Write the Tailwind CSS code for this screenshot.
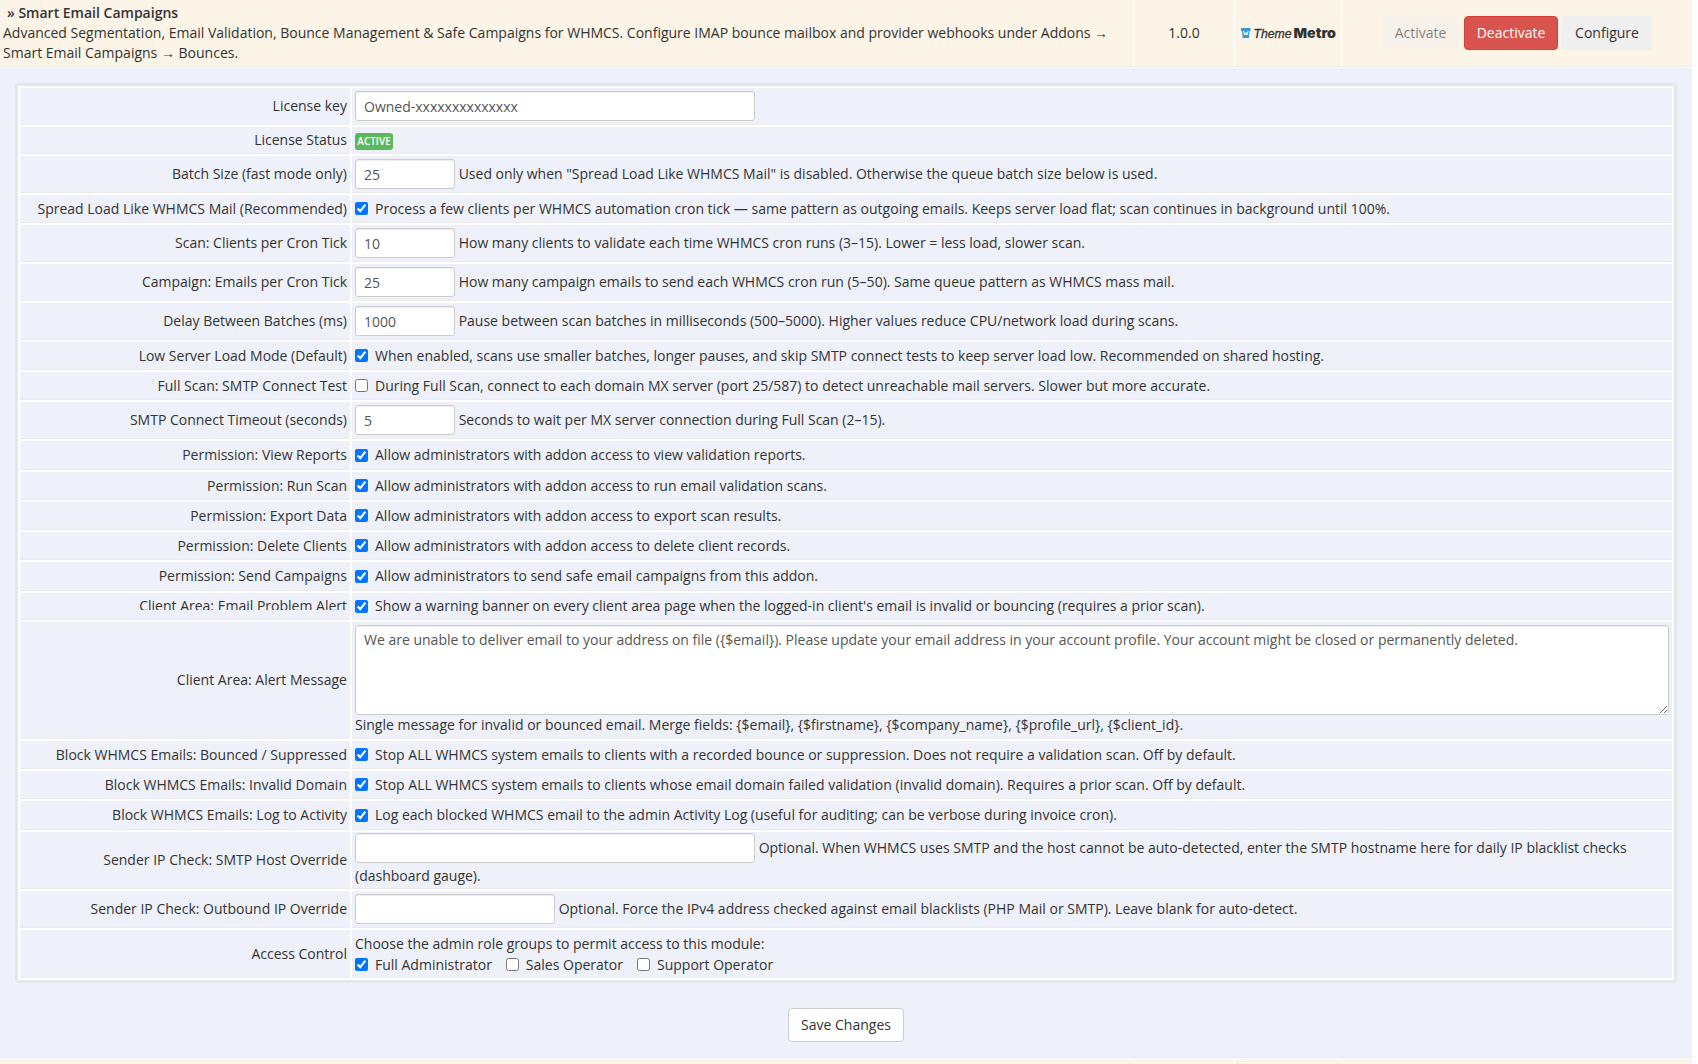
<!DOCTYPE html>
<html lang="en">
<head>
  <meta charset="UTF-8">
  <meta name="viewport" content="width=device-width, initial-scale=1.0">
  <title>Addon Modules</title>
  <script src="https://cdn.jsdelivr.net/npm/@tailwindcss/browser@4"></script>
</head>
<body class="bg-white text-[#333] text-sm leading-5 font-['Open_Sans',sans-serif] h-[1064px] overflow-hidden">

  <div class="w-[1692px] h-[1064px] bg-[#eef1f9] flex flex-col">

    <!-- Module row -->
    <header class="h-[68px] shrink-0 flex bg-[#fcf4e6] border-b border-white">
      <div class="w-[1134px] border-r border-r-white border-b border-b-[#ebebeb] pl-[3px] pt-[3px] pr-3">
        <p class="pl-1"><b class="font-semibold">» Smart Email Campaigns</b></p>
        <p class="w-[1118px]">Advanced Segmentation, Email Validation, Bounce Management &amp; Safe Campaigns for WHMCS. Configure IMAP bounce mailbox and provider webhooks under Addons → Smart Email Campaigns → Bounces.</p>
      </div>
      <div class="w-[101px] border-r border-r-white border-b border-b-[#ebebeb] flex items-center justify-center">1.0.0</div>
      <div class="w-[107px] border-r border-r-white border-b border-b-[#ebebeb] flex items-center pl-1.5">
        <svg width="96" height="16" viewBox="0 0 96 16">
          <path d="M0 3h9v3H8V4.800H6v5.700h1V13H2v-2.500h1V4.800H1V6H0z" fill="#3a9bd9"/>
          <path d="M0 3h9.500v3l-1.200.5L8 13H1.500L1.200 6.500 0 6z" fill="#3a9bd9"/>
          <path d="M2.500 6l1.200 4L4.800 7.500 5.900 10 7.100 6" fill="none" stroke="#fff" stroke-width="1"/>
          <text x="12.500" y="13" font-family="Liberation Sans Narrow, Liberation Sans" font-size="13" font-style="italic" fill="#333" stroke="#333" stroke-width=".3" textLength="38" lengthAdjust="spacingAndGlyphs">Theme</text>
          <text x="52.500" y="13" font-family="Inter" font-size="13" font-weight="900" fill="#333" textLength="42.500" lengthAdjust="spacingAndGlyphs">Metro</text>
        </svg>
      </div>
      <div class="flex-1 border-b border-b-[#ebebeb] flex items-center pl-[41px]">
        <button class="w-[75px] h-[34px] rounded bg-[#efefef]/35 text-[#333]/60">Activate</button>
        <button class="ml-[6px] w-[94px] h-[34px] rounded bg-[#d9534f] border border-[#d43f3a] text-white">Deactivate</button>
        <button class="ml-1 w-[90px] h-[34px] rounded bg-[#efefef]">Configure</button>
      </div>
    </header>

    <!-- Settings -->
    <main class="px-[15px] pt-[15px]">
      <table class="w-full table-fixed border-separate border-spacing-[2px] bg-white border-[3px] border-[#e2e7e9] rounded-[4px] [&_td]:bg-[#eef1f9] [&_td]:border-b [&_td]:border-[#ebebeb] [&_td]:px-[3px] [&_td]:py-0 [&_td:first-child]:text-right [&_input]:align-middle">
        <colgroup><col class="w-[330px]"><col></colgroup>
        <tbody id="settings"></tbody>
      </table>
      <div class="flex justify-center pt-[25px]">
        <button class="h-[34px] w-[116px] rounded bg-white border border-[#ccc]">Save Changes</button>
      </div>
    </main>

    <div class="mt-auto h-[7px] shrink-0 border-t border-[#ebebeb] bg-white pt-px">
      <div class="h-full bg-[#fcf4e6] flex">
        <div class="w-[1134px] border-r border-white"></div>
        <div class="w-[101px] border-r border-white"></div>
        <div class="w-[107px] border-r border-white"></div>
      </div>
    </div>
  </div>

  <script>
    const field = "h-[30px] px-2 bg-white border border-[#ccc] rounded-[3px] text-[#555] shadow-[inset_0_1px_1px_rgba(0,0,0,0.075)]";
    const text = (width, value, note = "") => `<div class="leading-[24px]"><input type="text" class="${field} ${width}" value="${value}"> <span class="relative top-px">${note}</span></div>`;
    const check = (label, checked = true) => `<label class="relative top-px inline-flex items-center gap-[7px]"><input type="checkbox" class="size-[13px]" ${checked ? "checked" : ""}>${label}</label>`;

    // [row height, label, control]
    const rows = [
      ["h-[37px]", "License key", text("w-[400px]", "Owned-xxxxxxxxxxxxxx")],
      ["h-[27px]", "License Status", `<span class="relative top-px flex items-center justify-center w-[38px] h-[17px] rounded-[3px] bg-[#5cb85c] text-white text-[10px] font-semibold">ACTIVE</span>`],
      ["h-[37px]", "Batch Size (fast mode only)", text("w-[100px]", "25", 'Used only when "Spread Load Like WHMCS Mail" is disabled. Otherwise the queue batch size below is used.')],
      ["h-[28px]", "Spread Load Like WHMCS Mail (Recommended)", check("Process a few clients per WHMCS automation cron tick — same pattern as outgoing emails. Keeps server load flat; scan continues in background until 100%.")],
      ["h-[37px]", "Scan: Clients per Cron Tick", text("w-[100px]", "10", "How many clients to validate each time WHMCS cron runs (3–15). Lower = less load, slower scan.")],
      ["h-[37px]", "Campaign: Emails per Cron Tick", text("w-[100px]", "25", "How many campaign emails to send each WHMCS cron run (5–50). Same queue pattern as WHMCS mass mail.")],
      ["h-[37px]", "Delay Between Batches (ms)", text("w-[100px]", "1000", "Pause between scan batches in milliseconds (500–5000). Higher values reduce CPU/network load during scans.")],
      ["h-[28px]", "Low Server Load Mode (Default)", check("When enabled, scans use smaller batches, longer pauses, and skip SMTP connect tests to keep server load low. Recommended on shared hosting.")],
      ["h-[28px]", "Full Scan: SMTP Connect Test", check("During Full Scan, connect to each domain MX server (port 25/587) to detect unreachable mail servers. Slower but more accurate.", false)],
      ["h-[37px]", "SMTP Connect Timeout (seconds)", text("w-[100px]", "5", "Seconds to wait per MX server connection during Full Scan (2–15).")],
      ["h-[29px]", "Permission: View Reports", check("Allow administrators with addon access to view validation reports.")],
      ["h-[28px]", "Permission: Run Scan", check("Allow administrators with addon access to run email validation scans.")],
      ["h-[28px]", "Permission: Export Data", check("Allow administrators with addon access to export scan results.")],
      ["h-[28px]", "Permission: Delete Clients", check("Allow administrators with addon access to delete client records.")],
      ["h-[29px]", "Permission: Send Campaigns", check("Allow administrators to send safe email campaigns from this addon.")],
      ["h-[27px]", `<div class="h-[14px] overflow-hidden leading-5 -mt-[6px]">Client Area: Email Problem Alert</div>`, check("Show a warning banner on every client area page when the logged-in client's email is invalid or bouncing (requires a prior scan).")],
      ["h-[117px]", "Client Area: Alert Message", `<textarea class="block w-full h-[90px] px-2 py-1 bg-white border border-[#ccc] rounded-[3px] text-[#555] shadow-[inset_0_1px_1px_rgba(0,0,0,0.075)]">We are unable to deliver email to your address on file ({$email}). Please update your email address in your account profile. Your account might be closed or permanently deleted.</textarea>Single message for invalid or bounced email. Merge fields: {$email}, {$firstname}, {$company_name}, {$profile_url}, {$client_id}.`],
      ["h-[28px]", "Block WHMCS Emails: Bounced / Suppressed", check("Stop ALL WHMCS system emails to clients with a recorded bounce or suppression. Does not require a validation scan. Off by default.")],
      ["h-[28px]", "Block WHMCS Emails: Invalid Domain", check("Stop ALL WHMCS system emails to clients whose email domain failed validation (invalid domain). Requires a prior scan. Off by default.")],
      ["h-[29px]", "Block WHMCS Emails: Log to Activity", check("Log each blocked WHMCS email to the admin Activity Log (useful for auditing; can be verbose during invoice cron).")],
      ["h-[57px]", "Sender IP Check: SMTP Host Override", text("w-[400px]", "", "Optional. When WHMCS uses SMTP and the host cannot be auto-detected, enter the SMTP hostname here for daily IP blacklist checks (dashboard gauge).")],
      ["h-[37px]", "Sender IP Check: Outbound IP Override", text("w-[200px]", "", "Optional. Force the IPv4 address checked against email blacklists (PHP Mail or SMTP). Leave blank for auto-detect.")],
      ["h-[48px]", "Access Control", `<div>Choose the admin role groups to permit access to this module:</div><div class="flex gap-[14px]">${check("Full Administrator")}${check("Sales Operator", false)}${check("Support Operator", false)}</div>`],
    ];

    document.getElementById("settings").innerHTML = rows
      .map(([height, label, control]) => `<tr class="${height}"><td>${label}</td><td>${control}</td></tr>`)
      .join("");
  </script>
</body>
</html>
